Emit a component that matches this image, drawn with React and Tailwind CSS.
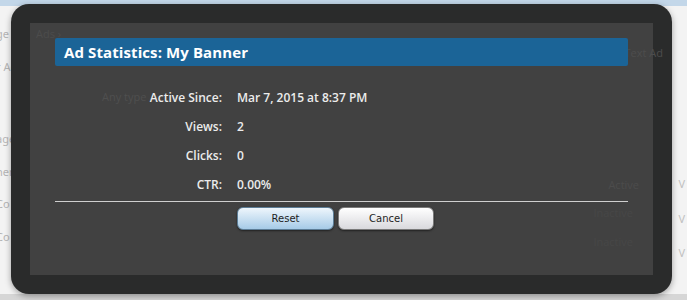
import React from 'react';

const stats = [
    { label: 'Active Since:', value: 'Mar 7, 2015 at 8:37 PM' },
    { label: 'Views:', value: '2' },
    { label: 'Clicks:', value: '0' },
    { label: 'CTR:', value: '0.00%' },
];

const PageBehind = () => {
    return (
        <div className="w-full h-full flex flex-col bg-[#f3f3f3] text-[#b5b5b5] text-[11px]">
            <div className="h-[6px] bg-[#c3d7e9] shrink-0"></div>
            <div className="flex flex-1">
                <div className="w-[14px] flex flex-col gap-[16px] pt-[20px] overflow-hidden whitespace-nowrap">
                    <span className="-ml-[4px]">ge</span>
                    <span className="-ml-[4px]">r Ad</span>
                    <span className="-ml-[4px] mt-[40px]">age (24)</span>
                    <span className="-ml-[4px]">ner</span>
                    <span className="-ml-[4px]">Co</span>
                    <span className="-ml-[4px]">Co</span>
                </div>
                <div className="flex-1"></div>
                <div className="w-[16px] flex flex-col gap-[18px] pt-[170px] items-end pr-[2px] text-[#c0c0c0]">
                    <span>V</span>
                    <span>V</span>
                    <span>V</span>
                </div>
            </div>
            <div className="h-[6px] bg-[#d6d6d6] shrink-0"></div>
        </div>
    );
};

const StatsDialog = () => {
    return (
        <div className="absolute left-[11px] top-[4px] w-[661px] h-[290px] rounded-[18px] bg-[#2a2b2b] p-[19px] shadow-[0_2px_6px_rgba(0,0,0,0.35)]">
            <div className="relative w-full h-full bg-[#414141] px-[25px] pt-[15px]" style={{ fontFamily: '"Open Sans", "Noto Sans", sans-serif' }}>
                {/* faint page content seen through the overlay */}
                <span className="absolute left-[6px] top-[3px] text-[11px] text-[#4c4c4c]">Ads ›</span>
                <span className="absolute left-[72px] top-[66px] text-[11px] text-[#4f4f4f]">Any type</span>
                <span className="absolute right-[-10px] top-[22px] text-[11px] text-[#4d4d4d]">Text Ad</span>
                <span className="absolute right-[14px] top-[154px] text-[11px] text-[#4c4c4c]">Active</span>
                <span className="absolute right-[20px] top-[182px] text-[11px] text-[#474747]">Inactive</span>
                <span className="absolute right-[20px] top-[211px] text-[11px] text-[#474747]">Inactive</span>

                <div className="relative h-[28px] rounded-[2px] bg-[#1b6497] flex items-center px-[9px]">
                    <h2 className="text-[15px] font-bold text-white tracking-[0.1px]">Ad Statistics: My Banner</h2>
                </div>

                <div className="relative mt-[17px] grid grid-cols-[167px_1fr] gap-x-[15px] text-[12px] font-semibold text-[#ececec]">
                    {stats.map((row) => (
                        <React.Fragment key={row.label}>
                            <div className="h-[29px] flex items-center justify-end">{row.label}</div>
                            <div className="h-[29px] flex items-center">{row.value}</div>
                        </React.Fragment>
                    ))}
                </div>

                <div className="relative mt-[2px] h-px bg-[#cfcfcf]"></div>

                <div className="relative mt-[5px] flex gap-[4px] pl-[182px]" style={{ fontFamily: '"DejaVu Sans", sans-serif' }}>
                    <button className="w-[97px] h-[23px] rounded-[6px] bg-gradient-to-b from-[#eef6fc] to-[#a6cbe7] border border-[#5c7d96] text-[10px] text-[#1e1e1e] shadow-[0_1px_2px_rgba(0,0,0,0.5)]">
                        Reset
                    </button>
                    <button className="w-[96px] h-[23px] rounded-[6px] bg-gradient-to-b from-[#ffffff] to-[#d9d9dd] border border-[#7a7a7a] text-[10px] text-[#1e1e1e] shadow-[0_1px_2px_rgba(0,0,0,0.5)]">
                        Cancel
                    </button>
                </div>
            </div>
        </div>
    );
};

const App = () => {
    return (
        <div className="relative w-[687px] h-[300px] overflow-hidden">
            <PageBehind />
            <StatsDialog />
        </div>
    );
};

export default App;
